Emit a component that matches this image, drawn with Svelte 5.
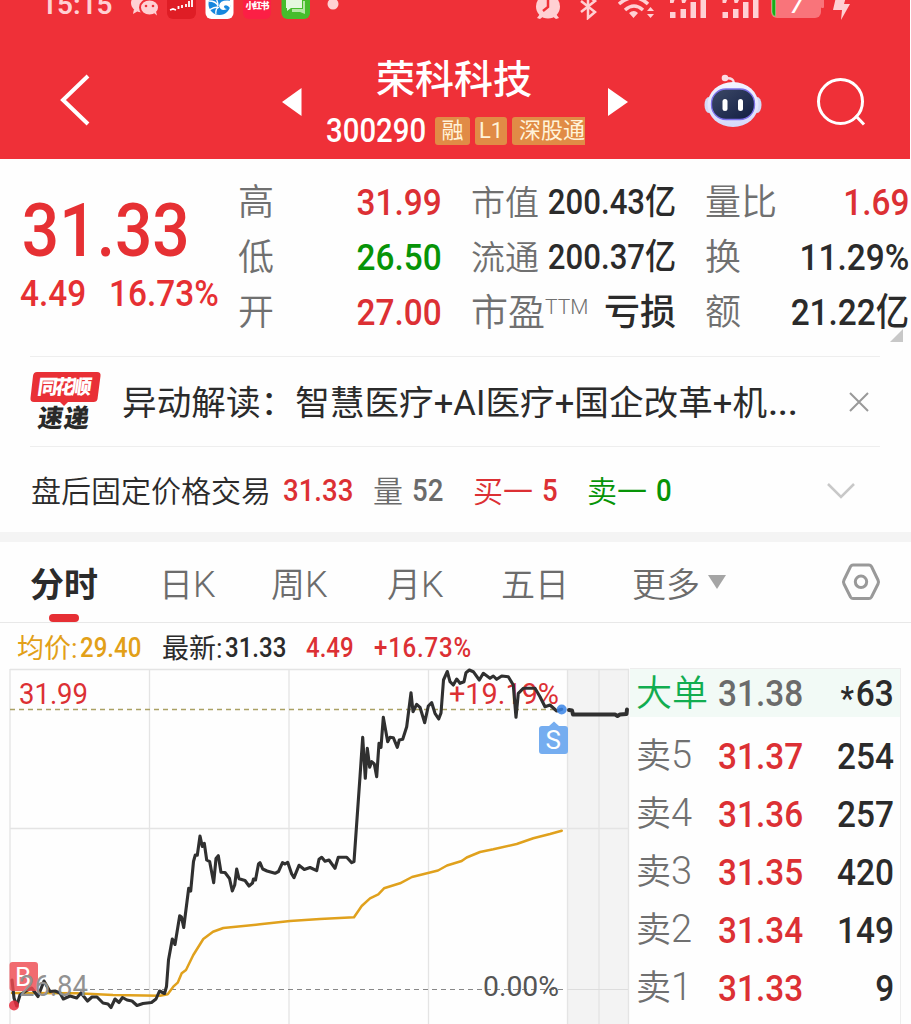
<script lang="ts">
  const stats = [
    { label: '高', value: '31.99', tone: 'red', label2: '市值', value2: '200.43亿', label3: '量比', value3: '1.69', tone3: 'red' },
    { label: '低', value: '26.50', tone: 'green', label2: '流通', value2: '200.37亿', label3: '换', value3: '11.29%', tone3: '' },
    { label: '开', value: '27.00', tone: 'red', label2: '市盈', value2: '亏损', label3: '额', value3: '21.22亿', tone3: '' }
  ];

  const tabs = [
    { name: '分时', unit: '' },
    { name: '日', unit: 'K' },
    { name: '周', unit: 'K' },
    { name: '月', unit: 'K' },
    { name: '五日', unit: '' }
  ];
  let active = $state('分时');

  const asks = [
    { level: 5, price: '31.37', volume: '254' },
    { level: 4, price: '31.36', volume: '257' },
    { level: 3, price: '31.35', volume: '420' },
    { level: 2, price: '31.34', volume: '149' },
    { level: 1, price: '31.33', volume: '9' }
  ];

  const price =
    '12,980 14,998 16.7,1006 20,995 26,991 31.7,988 38,996.5 44,981 50,991.5 55,991 60,993 63.3,999 70,996 76.7,998 81,993 ' +
    '87.5,1001 92,997 97,997 103,1003 108,1004 111,1007.5 115,999 119,1002.5 122.5,997.5 127,1000 132,1001 137,1005.5 143,1003.5 ' +
    '151.5,1002.5 156,999 159.5,991 164.5,993.5 166.5,986.5 168.5,960 172.3,939 175,944.5 179.7,915.7 181.5,917 183.7,927.5 ' +
    '188.7,888.3 190.7,891 193.5,861.5 195.3,855 197.3,855.3 200,836 202.3,846.5 204.3,843.3 206.7,860 209.7,861.7 213.7,882.7 ' +
    '216,858.5 218.3,855.7 221,872.3 225,872.5 229.5,878.5 232.3,891 234.7,885 236.7,869 239,878.7 245,880.5 249,886 252.5,883 ' +
    '253.5,879 255.5,880 258.5,864 260,862.7 262.7,869 267,871 275,873.3 278.5,871.5 282.5,862.7 285,864 287.7,862.3 291.7,874 ' +
    '294,877.7 299,865.3 304.3,869.5 310,867.5 316.7,870.7 319,859.3 321.7,857.3 325,861.3 329,860 335,868.3 338.3,857.3 ' +
    '346.7,857.3 351.7,862.7 354,861.7 360,776.7 362.7,737.3 365.3,778.3 367.3,748.3 369.7,767.3 371.7,761.7 374.3,764 ' +
    '376.7,776.7 379,743.3 381,747.3 383.3,717.3 387.7,741.7 390,737.3 393.3,737.7 397.3,747.3 399.3,740 402.7,739.3 ' +
    '406.7,726.7 411,692.7 413,711.7 416.7,704.3 420,707.3 424.7,722.7 428.3,706 431.7,702.7 435,713.3 438.7,719 441,713 ' +
    '443.5,680 447.3,671.5 450,681.7 453.3,685 456.7,679 460,683.3 464,681.7 466,672.7 469.3,670 473.3,671.7 479.3,680 ' +
    '483.3,673.3 490,678.3 493.3,676 496.7,679.3 501.7,676 508.3,676.7 513.3,685 516,717.3 518.3,693.3 523.3,688.3 ' +
    '535,688.3 540,696.7 545,706.7 550,705 556.7,711 561.7,709.3';
  const afterHours = '569,710 572,710.5 573,714.5 615,714.5 617.5,716 620,714.5 626.5,714 627,709.5';
  const average =
    '12,993 76.7,993.3 113,995 160,995.7 167.7,994.3 173.3,986.7 177.7,982.7 181.7,973.3 186,970 193.3,955 203.3,939 ' +
    '213,931.7 223.3,928 260,924.3 290,921 320,919 354,917.3 361.7,906 370,898.3 378.3,894.3 384,888.3 400,883.3 412,877 ' +
    '430,872.5 438,870.5 447,865.5 461.7,861 466.7,857.5 480,852 493.3,849.3 516.7,844 533.3,838.3 550,834 561.7,830.7';
</script>

<div class="app">
  <header>
    <div class="status">
      <span class="clock">15:15</span>
      <svg class="status-icons" viewBox="0 0 911 20">
        <g fill="#ffd0d3">
          <ellipse cx="143" cy="3" rx="12" ry="9.5" />
          <path d="M134 9l-1 5 5-3z" />
          <ellipse cx="149.500" cy="7.500" rx="9.500" ry="8" stroke="#ef3038" stroke-width="2" />
          <circle cx="333" cy="4" r="5.500" />
        </g>
        <path d="M154 13l3 2.500-1-4z" fill="#ffd0d3" />
        <circle cx="146" cy="6" r="1.300" fill="#ef3038" />
        <circle cx="153" cy="6" r="1.300" fill="#ef3038" />
        <rect x="167" y="-10" width="29" height="29" rx="6" fill="#df1d25" />
        <path d="M170 10l3-1 3 1M178.500 6v3M182 5v3M186 4v3M189 1v6M192-2v9" stroke="#fff" stroke-width="1.800" fill="none" />
        <rect x="205.500" y="-10" width="28" height="29" rx="6" fill="#fff" />
        <circle cx="219.500" cy="4" r="11" fill="#1787dd" />
        <path d="M209 1q7 0 9 5M214-4q4 4 4 10M209 10q5-3 9-3M216 14q-1-5 3-7" fill="none" stroke="#fff" stroke-width="1.300" />
        <path d="M219 6q1-7 13-5l-2 7q-3-4-6-2 0 3 3 3-6 3-8-3z" fill="#fff" />
        <rect x="243" y="-10" width="28" height="29" rx="6" fill="#fc1f45" />
        <text x="245.500" y="8.500" class="red-book" textLength="24">小红书</text>
        <rect x="281.500" y="-10" width="28.500" height="29" rx="6" fill="#46bd2c" />
        <path d="M303 1h2v13l-5-2h-8v-3h11z" fill="#b4e6a4" />
        <path d="M286-4h16v12h-11l-4 3v-3h-1z" fill="#e5f8df" />

        <g fill="#ffd0d3">
          <circle cx="548" cy="6.500" r="12" />
          <path d="M540 14l-3 4 3 1 4-3zM556 14l3 4-3 1-4-3z" />
          <path d="M629 13q5-4 9 0l-4.500 5zM647 11l3.500-4 3.500 4zM647 14h7l-3.500 4z" />
          <path d="M670 12h5.500v6H670zM680.500 9h5.500v9h-5.500zM690.500 2h5.500v16h-5.500zM700.500-4h5.500v22h-5.500zM670-3h5.500l-2 6H670zM681-3h7l-3 6h-3z" />
          <path d="M722.500 12h5.500v6h-5.500zM733 9h5.500v9H733zM743 2h5.500v16H743zM753-4h5.500v22H753zM722.500-3h5.500l-2 6h-3.500zM733.500-3h7l-3 6h-3z" />
          <path d="M836-3h10l-2 7h6l-9 16 1-10h-9z" />
        </g>
        <path d="M548 0v7l-5 4" stroke="#ef3038" stroke-width="2.500" fill="none" />
        <path d="M581 1l14 11-7 6v-22l7 5-14 11" stroke="#ffd0d3" stroke-width="2.500" fill="none" />
        <path d="M619 4q15-13 29 0M625 10q9-8 18 0" stroke="#ffd0d3" stroke-width="3.500" fill="none" />
        <rect x="771" y="-14" width="50" height="32" rx="6" fill="#f9747a" />
        <rect x="821" y="-4" width="3" height="12" rx="1" fill="#f9747a" />
        <path d="M775.500-10V16.500Q772 15.500 772 12V-10z" fill="#17ac18" stroke="#8ee08b" stroke-width=".6" />
        <text x="790" y="13" class="battery">7</text>
      </svg>
    </div>
    <div class="title-bar">
      <svg class="back" viewBox="0 0 30 52"><path d="M28 2 3 26l25 24" fill="none" stroke="#fff" stroke-width="4" /></svg>
      <svg class="arrow prev" viewBox="0 0 20 28"><path d="M19.500 0v28L0 14z" fill="#fff" /></svg>
      <div class="stock">
        <h1>荣科科技</h1>
        <div class="code-row">
          <span class="code num">300290</span>
          <span class="tag">融</span>
          <span class="tag l1">L1</span>
          <span class="tag wide">深股通</span>
        </div>
      </div>
      <svg class="arrow next" viewBox="0 0 20 28"><path d="M0 0v28l20-14z" fill="#fff" /></svg>
      <svg class="robot" viewBox="0 0 58 54">
        <defs>
          <linearGradient id="shell" x1="0" y1="0" x2="0" y2="1">
            <stop offset="0" stop-color="#f4f4ff" /><stop offset="1" stop-color="#d5d9fa" />
          </linearGradient>
          <linearGradient id="face" x1="0" y1="0" x2="1" y2="1">
            <stop offset="0" stop-color="#3d4967" /><stop offset="1" stop-color="#111d42" />
          </linearGradient>
        </defs>
        <path d="M22 4.500q8-1 8 5" fill="none" stroke="#f7dce5" stroke-width="2.500" />
        <circle cx="21" cy="4" r="3.300" fill="#fbdce4" />
        <ellipse cx="5" cy="31" rx="4.500" ry="8" fill="#d5d9f5" />
        <ellipse cx="53" cy="31" rx="4.500" ry="8" fill="#d5d9f5" />
        <ellipse cx="29" cy="30.500" rx="25.500" ry="22.500" fill="url(#shell)" />
        <rect x="7.500" y="15" width="43" height="30.500" rx="14.500" fill="url(#face)" stroke="#7c70e8" stroke-width="1.300" />
        <rect x="18.500" y="25" width="5" height="12" rx="2.500" fill="#fff" />
        <rect x="34" y="25" width="5" height="12" rx="2.500" fill="#fff" />
      </svg>
      <svg class="search" viewBox="0 0 50 50"><circle cx="24.500" cy="23.500" r="22" /><path d="m39.500 37.500 8.500 9" /></svg>
    </div>
  </header>

  <section class="quote">
    <div class="last">
      <div class="big num">31.33</div>
      <div class="change"><span class="num">4.49</span><span class="num">16.73%</span></div>
    </div>
    <div class="stats">
      {#each stats as s, i}
        <span class="label">{s.label}</span>
        <span class="value {s.tone}"><b class="num right">{s.value}</b></span>
        <span class="label second" class:large={i === 2}>{s.label2}{#if i === 2}<sup>TTM</sup>{/if}</span>
        <span class="value small"><b class="num right" class:loss={i === 2}>{s.value2}</b></span>
        <span class="label">{s.label3}</span>
        <span class="value {s.tone3}"><b class="num right">{s.value3}</b></span>
      {/each}
    </div>
    <i class="corner"></i>
  </section>

  <section class="news">
    <svg class="badge" viewBox="0 0 72 62">
      <path d="M7 1h60q4 0 3.500 4l-3 23q-.5 3-4 3H38l-4 4-4-4H4q-4 0-3.500-4L3 5q.5-4 4-4z" fill="#e93036" />
      <text x="7" y="23.500" transform="skewX(-8) translate(3 0)" class="brand" textLength="54">同花顺</text>
      <text x="8" y="56.500" transform="skewX(-8) translate(7 0)" class="express" textLength="51">速递</text>
    </svg>
    <p>异动解读：智慧医疗+AI医疗+国企改革+机<span>...</span></p>
    <svg class="close" viewBox="0 0 20 20"><path d="m1 1 18 18M19 1 1 19" /></svg>
  </section>

  <section class="fixed-price">
    <span class="name">盘后固定价格交易</span>
    <span class="num red p1">31.33</span>
    <span class="grey cn">量</span>
    <span class="num grey p2">52</span>
    <span class="red cn two">买一</span>
    <span class="num red p3">5</span>
    <span class="green cn two">卖一</span>
    <span class="num green p4">0</span>
    <svg class="chevron" viewBox="0 0 28 16"><path d="m1 1 13 13L27 1" /></svg>
  </section>

  <nav>
    {#each tabs as tab}
      <button class:active={active === tab.name} onclick={() => (active = tab.name)}>{tab.name}{#if tab.unit}<span>{tab.unit}</span>{/if}</button>
    {/each}
    <button class="more">更多<i></i></button>
    <svg class="settings" viewBox="0 0 40 38">
      <path d="M12 2h16q1.500 0 2.500 1.500L37 17q1 2 0 4l-6.500 13q-1 1.500-2.500 1.500H12q-1.500 0-2.500-1.500L3 21q-1-2 0-4L9.500 3.500Q10.500 2 12 2z" />
      <circle cx="20" cy="18.800" r="5.700" />
    </svg>
  </nav>

  <div class="summary">
    <span class="gold cn">均价:</span><span class="num gold s1">29.40</span>
    <span class="cn">最新:</span><span class="num s2">31.33</span>
    <span class="num red s3">4.49</span>
    <span class="num red s4">+16.73%</span>
  </div>

  <main>
    <svg class="chart" viewBox="0 668 630 356">
      <rect x="567" y="669" width="62" height="355" fill="#f3f3f3" />
      <path d="M10 669.500H629M10 828.500H629M10 669V1024M149.500 669V1024M289 669V1024M428.500 669V1024M567.500 669V1024M599 669V1024M628.500 669V1024" class="grid" />
      <path d="M10 709.500H560" stroke="#aaa164" stroke-width="1.300" stroke-dasharray="5 4" />
      <path d="M90 989.500H567" stroke="#888" stroke-width="1.200" stroke-dasharray="5 4" />
      <path d="M567 989.500h61" stroke="#ddd" />
      <polyline points={average} class="line average" />
      <text x="19" y="703.500" class="mark red" textLength="69" lengthAdjust="spacingAndGlyphs">31.99</text>
      <text x="449" y="703.500" class="mark red" textLength="110" lengthAdjust="spacingAndGlyphs">+19.19%</text>
      <polyline points={price} class="line price" />
      <polyline points={afterHours} class="line after" />
      <text x="483" y="996" class="mark base" textLength="76" lengthAdjust="spacingAndGlyphs">0.00%</text>
      <rect x="9.500" y="962" width="28.500" height="29" rx="3" fill="#ee4a50" opacity=".82" />
      <text x="15" y="986" class="flag">B</text>
      <text x="19" y="996" class="mark prev-close" textLength="69" lengthAdjust="spacingAndGlyphs">26.84</text>
      <circle cx="14" cy="1005.500" r="5" fill="#e52b3d" opacity=".85" />
      <circle cx="561.700" cy="709.500" r="5" fill="#3985e8" opacity=".85" />
      <path d="M542 726h7l5-4.500 5 4.500h6q3 0 3 3v22q0 3-3 3h-23q-3 0-3-3v-22q0-3 3-3z" fill="#75adf0" />
      <text x="545.500" y="749" class="flag">S</text>
    </svg>

    <div class="book">
      <div class="row big-order">
        <span class="level">大单</span>
        <span class="num">31.38</span>
        <span class="volume"><span class="num right"><span class="star">*</span>63</span></span>
      </div>
      {#each asks as ask}
        <div class="row">
          <span class="level">卖<span>{ask.level}</span></span>
          <span class="num red">{ask.price}</span>
          <span class="volume"><span class="num right">{ask.volume}</span></span>
        </div>
      {/each}
    </div>
  </main>
</div>

<style>
  :global(body) {
    background: #fefefe;
  }

  .app {
    width: 911px;
    height: 1024px;
    overflow: hidden;
    background: #fefefe;
    color: #2b2b2b;
    font-family: Roboto, 'Noto Sans CJK SC', sans-serif;
    white-space: nowrap;
  }

  .app * {
    box-sizing: border-box;
  }

  svg {
    display: block;
    flex: none;
  }

  .num {
    display: inline-block;
    font-weight: 500;
    transform: scaleX(0.89);
    transform-origin: left center;
  }

  .right {
    transform-origin: right center;
  }

  .red {
    color: #dc3034;
    fill: #dc3034;
  }

  .green {
    color: #079407;
  }

  .grey {
    color: #6b6b6b;
  }

  .gold {
    color: #e2a018;
  }

  header {
    width: 910px;
    height: 159px;
    background: #ef3038;
    color: #fff;
  }

  .status {
    display: grid;
    height: 20px;
    overflow: hidden;
  }

  .clock {
    grid-area: 1 / 1;
    height: 20px;
    padding-left: 41px;
    font-size: 28px;
    font-weight: 600;
    line-height: 10px;
    color: #ffd0d3;
  }

  .status-icons {
    grid-area: 1 / 1;
    width: 911px;
    height: 20px;
  }

  .red-book {
    font-size: 9px;
    font-weight: 900;
    fill: #fff;
  }

  .battery {
    font-size: 23px;
    font-style: italic;
    font-weight: 500;
    fill: #fff;
  }

  .title-bar {
    display: flex;
    align-items: flex-start;
    height: 139px;
    padding-left: 60px;
  }

  .back {
    width: 30px;
    height: 52px;
    margin-top: 54px;
  }

  .arrow {
    width: 20px;
    height: 28px;
    margin-top: 68px;
  }

  .prev {
    margin-left: 192px;
  }

  .stock {
    width: 260px;
    margin: 34px 0 0 24px;
  }

  h1 {
    margin: 0 0 0 50px;
    font-size: 39px;
    font-weight: 500;
    line-height: 52px;
  }

  .code-row {
    display: flex;
    align-items: center;
    gap: 5px;
    height: 50px;
  }

  .code {
    width: 104px;
    font-size: 33px;
    line-height: 50px;
  }

  .tag {
    width: 35px;
    height: 28px;
    border-radius: 3px;
    background: #e18b46;
    color: #fff3d9;
    font-size: 22px;
    line-height: 28px;
    text-align: center;
  }

  .l1 {
    width: 32px;
  }

  .wide {
    width: 73px;
    padding-left: 7px;
    border-radius: 3px 0 0 3px;
    text-align: left;
  }

  .next {
    margin-left: 22px;
  }

  .robot {
    width: 58px;
    height: 54px;
    margin: 54px 0 0 76px;
  }

  .search {
    width: 50px;
    height: 50px;
    margin: 58px 0 0 54px;
    fill: none;
    stroke: #fff;
    stroke-width: 3;
  }

  .quote {
    position: relative;
    display: flex;
    height: 197px;
    padding-top: 16px;
  }

  .last {
    width: 238px;
    padding: 13px 0 0 20px;
    color: #e63033;
  }

  .big {
    padding-left: 2px;
    font-size: 74px;
    line-height: 86px;
  }

  .change {
    display: flex;
    font-size: 37.5px;
    line-height: 39px;
  }

  .change .num:first-child {
    width: 89px;
  }

  .stats {
    display: grid;
    grid-template-columns: 80px 153px 116px 118px 70px 134px;
    grid-template-rows: repeat(3, 55px);
    align-items: center;
    line-height: 55px;
  }

  .label {
    padding-top: 2px;
    font-size: 36px;
    font-weight: 350;
    color: #707070;
  }

  .second {
    font-size: 34px;
  }

  .second.large {
    font-size: 37px;
  }

  sup {
    font-size: 21px;
    line-height: 0;
    vertical-align: 12px;
  }

  .value {
    display: flex;
    justify-content: flex-end;
    padding-right: 29px;
    font-size: 37.5px;
    line-height: 53px;
  }

  .value.small {
    padding-right: 29px;
    font-size: 35px;
  }

  .stats .value:nth-child(6n) {
    padding-right: 0;
  }

  .loss {
    padding-top: 2px;
    font-size: 36px;
    transform: none;
  }

  .corner {
    position: absolute;
    left: 890px;
    top: 170px;
    border-left: 13px solid transparent;
    border-bottom: 13px solid #c8c8c8;
  }

  .news {
    display: flex;
    align-items: center;
    width: 850px;
    height: 91px;
    margin-left: 30px;
    border-top: 1px solid #eee;
    border-bottom: 1px solid #eee;
  }

  .badge {
    width: 72px;
    height: 62px;
  }

  .brand {
    font-size: 20px;
    font-weight: 900;
    fill: #fff;
  }

  .express {
    font-size: 25px;
    font-weight: 900;
    fill: #292929;
  }

  .news p {
    width: 727px;
    margin: 2px 0 0 20px;
    font-size: 34.6px;
    font-weight: 370;
    line-height: 50px;
    letter-spacing: 0.05px;
  }

  .news p span {
    padding-left: 1px;
    font-weight: 500;
    letter-spacing: 0.3px;
  }

  .close {
    width: 20px;
    height: 20px;
    stroke: #999;
    stroke-width: 2;
  }

  .fixed-price {
    display: flex;
    align-items: center;
    height: 85px;
    padding: 3px 0 0 31px;
    font-size: 31px;
    line-height: 40px;
  }

  .name {
    width: 252px;
    padding-top: 2px;
    font-size: 30px;
    font-weight: 350;
  }

  .cn {
    font-size: 30px;
    font-weight: 350;
  }

  .p1 {
    width: 90px;
  }

  .fixed-price .cn {
    width: 39px;
    padding-top: 2px;
  }

  .p2 {
    width: 61px;
  }

  .fixed-price .two {
    width: 69px;
  }

  .p3 {
    width: 45px;
  }

  .p4 {
    width: 171px;
  }

  .chevron {
    width: 28px;
    height: 16px;
    fill: none;
    stroke: #c8c8c8;
    stroke-width: 2.5;
  }

  nav {
    display: flex;
    align-items: center;
    height: 91px;
    padding-left: 30px;
    border-top: 10px solid #f4f4f4;
    border-bottom: 1px solid #e8e8e8;
  }

  button {
    position: relative;
    width: 114px;
    height: 80px;
    padding: 5px 0 0;
    border: 0;
    background: none;
    color: #6c6c6c;
    font: 350 34px/76px Roboto, 'Noto Sans CJK SC', sans-serif;
    text-align: left;
  }

  button span {
    font-size: 36px;
    font-weight: 350;
    line-height: 0;
  }

  button:first-child {
    width: 129px;
  }

  button:nth-child(2) {
    width: 112px;
  }

  button:nth-child(3) {
    width: 116px;
  }

  button:nth-child(5) {
    width: 131px;
  }

  button.active {
    color: #2b2b2b;
    font-weight: 700;
  }

  button.active::after {
    content: '';
    position: absolute;
    left: 19px;
    bottom: 0;
    width: 30px;
    height: 8px;
    border-radius: 4px;
    background: #e62f34;
  }

  .more {
    display: flex;
    align-items: center;
    width: 209px;
  }

  .more i {
    margin: -6px 0 0 8px;
    border: 9px solid transparent;
    border-top: 14px solid #a5a5a5;
    border-bottom: 0;
  }

  .settings {
    width: 40px;
    height: 38px;
    fill: none;
    stroke: #999;
    stroke-width: 3;
  }

  .summary {
    display: flex;
    align-items: center;
    height: 45px;
    padding: 6px 0 0 17px;
    font-size: 27px;
    line-height: 39px;
  }

  .summary .cn {
    width: 63px;
    padding-top: 1px;
    font-size: 27px;
    font-weight: 400;
  }

  .s1 {
    width: 82px;
  }

  .s2 {
    width: 81px;
  }

  .s3 {
    width: 68px;
  }

  .summary .s4 {
    letter-spacing: 0.9px;
  }

  main {
    display: flex;
    height: 356px;
  }

  .chart {
    width: 630px;
    height: 356px;
  }

  .grid {
    fill: none;
    stroke: #e4e4e4;
    stroke-width: 1.3;
  }

  .line {
    fill: none;
    stroke-linejoin: round;
    stroke-linecap: round;
  }

  .price {
    stroke: #303030;
    stroke-width: 3.1;
  }

  .after {
    stroke: #303030;
    stroke-width: 4;
  }

  .average {
    stroke: #e0a11d;
    stroke-width: 2.5;
  }

  .mark {
    font-size: 30px;
    font-weight: 450;
  }

  .base {
    fill: #555;
    font-size: 28px;
  }

  .prev-close {
    fill: #929292;
  }

  .flag {
    font-size: 26px;
    fill: #fff;
  }

  .book {
    width: 271px;
    border-top: 1px solid #ededed;
    border-right: 1px solid #ededed;
  }

  .row {
    display: grid;
    grid-template-columns: 82px 100px 76px;
    align-items: center;
    height: 58px;
    padding-left: 6px;
    font-size: 37.5px;
    line-height: 56px;
  }

  .level {
    padding-top: 2px;
    font-size: 35px;
    font-weight: 350;
    color: #707070;
  }

  .level span {
    font-size: 38px;
    font-weight: 350;
    line-height: 0;
  }

  .volume {
    display: flex;
    justify-content: flex-end;
  }

  .big-order {
    height: 48px;
    margin-bottom: 10px;
    background: #f2faf6;
    color: #6b6b6b;
    line-height: 44px;
  }

  .big-order .level {
    padding-top: 1px;
    font-size: 36px;
    color: #12ad50;
  }

  .big-order .volume {
    color: #2b2b2b;
  }

  .star {
    margin-right: 2px;
    font-size: 34px;
    line-height: 0;
    vertical-align: -4px;
  }
</style>
